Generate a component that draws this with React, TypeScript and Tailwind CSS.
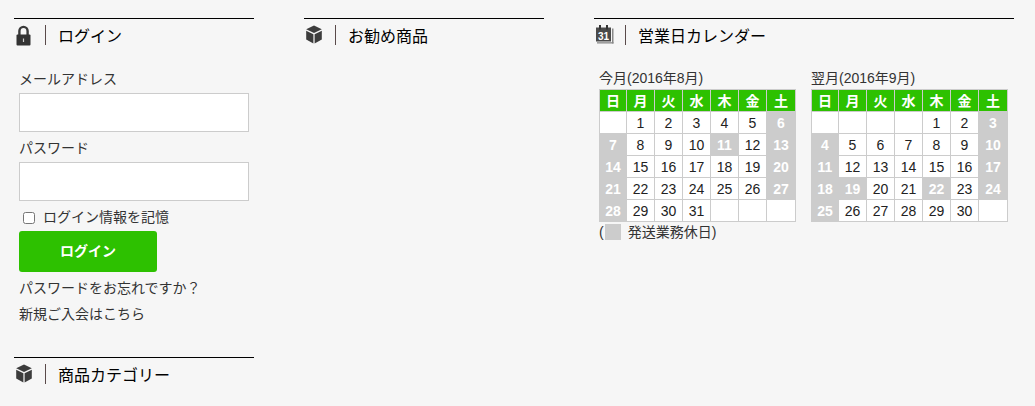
import React from 'react';

const LockIcon = () => (
  <svg width="15" height="21" viewBox="0 0 15 21" className="block">
    <path d="M2.2 10V6a5.3 5.3 0 0 1 10.6 0v4h-2.4V6a2.9 2.9 0 0 0-5.8 0v4z" fill="#3a3a3a" />
    <rect x="0.5" y="9.5" width="14" height="11" rx="1" fill="#333" />
    <rect x="6.9" y="13.5" width="1.2" height="3.5" fill="#ccc" />
  </svg>
);

const BoxIcon = () => (
  <svg width="16" height="19" viewBox="0 0 16 19" className="block">
    <path d="M8 0.5 15.8 4.2 8 8 0.2 4.2z" fill="#3c3c3c" />
    <path d="M0.2 5.8 7.4 9.3V18.5L0.2 14.6z" fill="#3c3c3c" />
    <path d="M15.8 5.8 8.6 9.3V18.5L15.8 14.6z" fill="#3c3c3c" />
  </svg>
);

const CalendarIcon = () => (
  <svg width="18" height="19" viewBox="0 0 18 19" className="block">
    <rect x="0" y="2.5" width="15" height="14" fill="#4a4a4a" />
    <rect x="16" y="3.5" width="1.5" height="15" fill="#888" />
    <rect x="1" y="17.2" width="16.5" height="1.3" fill="#888" />
    <rect x="3" y="0" width="2" height="4.5" fill="#333" />
    <rect x="10" y="0" width="2" height="4.5" fill="#333" />
    <text x="7.5" y="15" textAnchor="middle" fontSize="10" fontWeight="700" fill="#fff" fontFamily="Liberation Sans">31</text>
  </svg>
);

const SectionTitle = ({ icon, title, className }: { icon: React.ReactNode; title: string; className?: string }) => (
  <div className={`border-t border-black flex items-center h-[36px] ${className ?? ''}`}>
    <div className="w-[32px] h-[20px] self-start mt-[6px] pl-[2px] border-r border-[#5a4a4a]">{icon}</div>
    <h2 className="ml-[12px] text-[16px] text-black">{title}</h2>
  </div>
);

const weekdays = ['日', '月', '火', '水', '木', '金', '土'];

type Day = number | null;

const august: Day[] = [null, 1, 2, 3, 4, 5, 6, 7, 8, 9, 10, 11, 12, 13, 14, 15, 16, 17, 18, 19, 20, 21, 22, 23, 24, 25, 26, 27, 28, 29, 30, 31, null, null, null];
const september: Day[] = [null, null, null, null, 1, 2, 3, 4, 5, 6, 7, 8, 9, 10, 11, 12, 13, 14, 15, 16, 17, 18, 19, 20, 21, 22, 23, 24, 25, 26, 27, 28, 29, 30, null];

const Calendar = ({ label, days, holidays }: { label: string; days: Day[]; holidays: number[] }) => {
  const weeks: Day[][] = [];
  for (let i = 0; i < days.length; i += 7) weeks.push(days.slice(i, i + 7));

  return (
    <div className="w-[196px]">
      <div className="h-[20px] text-[14px] leading-[18px] text-[#333]">{label}</div>
      <table className="border-collapse table-fixed w-[196px]">
        <colgroup>
          <col className="w-[27px]" />
          <col className="w-[28px]" />
          <col className="w-[28px]" />
          <col className="w-[28px]" />
          <col className="w-[28px]" />
          <col className="w-[28px]" />
          <col className="w-[29px]" />
        </colgroup>
        <thead>
          <tr className="h-[22px]">
            {weekdays.map((d) => (
              <th key={d} className="p-0 border border-[#ccc] bg-[#2dc100] text-white text-[14px] leading-none font-bold text-center">
                {d}
              </th>
            ))}
          </tr>
        </thead>
        <tbody>
          {weeks.map((week, i) => (
            <tr key={i} className="h-[22px]">
              {week.map((d, j) =>
                d !== null && holidays.includes(d) ? (
                  <td key={j} className="p-0 border border-[#ccc] bg-[#ccc] text-white font-bold text-[14px] leading-none text-center">
                    {d}
                  </td>
                ) : (
                  <td key={j} className="p-0 border border-[#ccc] bg-white text-[#222] text-[14px] leading-none text-center">
                    {d}
                  </td>
                )
              )}
            </tr>
          ))}
        </tbody>
      </table>
    </div>
  );
};

const App: React.FC = () => {
  return (
    <div
      className="w-[1035px] h-[406px] overflow-hidden bg-[#f6f6f6] pt-[18px] pl-[14px] flex items-start text-[#333]"
      style={{ fontFamily: '"Liberation Sans", "Noto Sans CJK JP", sans-serif' }}
    >
      {/* Login column */}
      <div className="w-[240px]">
        <SectionTitle icon={<LockIcon />} title="ログイン" />
        <div className="pl-[5px] pt-[15px]">
          <label className="block text-[14px] leading-[20px] h-[24px]">メールアドレス</label>
          <input type="text" className="block w-[230px] h-[39px] bg-white border border-[#ccc] box-border" />
          <label className="block text-[14px] leading-[20px] h-[24px] mt-[6px]">パスワード</label>
          <input type="password" className="block w-[230px] h-[39px] bg-white border border-[#ccc] box-border" />
          <label className="flex items-center h-[20px] mt-[6px] pl-[4px] text-[14px]">
            <input type="checkbox" className="w-[12px] h-[12px] mt-[2px] mr-[8px]" />
            ログイン情報を記憶
          </label>
          <button className="block w-[138px] h-[41px] mt-[4px] bg-[#2dc100] rounded-[3px] text-white text-[14px] font-bold">
            ログイン
          </button>
          <p className="text-[14px] leading-[20px] mt-[6px]">パスワードをお忘れですか？</p>
          <p className="text-[14px] leading-[20px] mt-[6px]">新規ご入会はこちら</p>
        </div>
        <SectionTitle className="mt-[33px]" icon={<BoxIcon />} title="商品カテゴリー" />
      </div>

      {/* Recommended column */}
      <div className="w-[240px] ml-[50px]">
        <SectionTitle icon={<BoxIcon />} title="お勧め商品" />
      </div>

      {/* Calendar column */}
      <div className="w-[420px] ml-[50px]">
        <SectionTitle icon={<CalendarIcon />} title="営業日カレンダー" />
        <div className="flex gap-[16px] pl-[5px] pt-[15px]">
          <Calendar label="今月(2016年8月)" days={august} holidays={[6, 7, 11, 13, 14, 20, 21, 27, 28]} />
          <Calendar label="翌月(2016年9月)" days={september} holidays={[3, 4, 10, 11, 17, 18, 19, 22, 24, 25]} />
        </div>
        <div className="flex items-center pl-[5px] mt-[1px] h-[18px] text-[14px]">
          (<span className="w-[16px] h-[16px] ml-[1px] mr-[7px] bg-[#ccc]" />発送業務休日)
        </div>
      </div>
    </div>
  );
};

export default App;
